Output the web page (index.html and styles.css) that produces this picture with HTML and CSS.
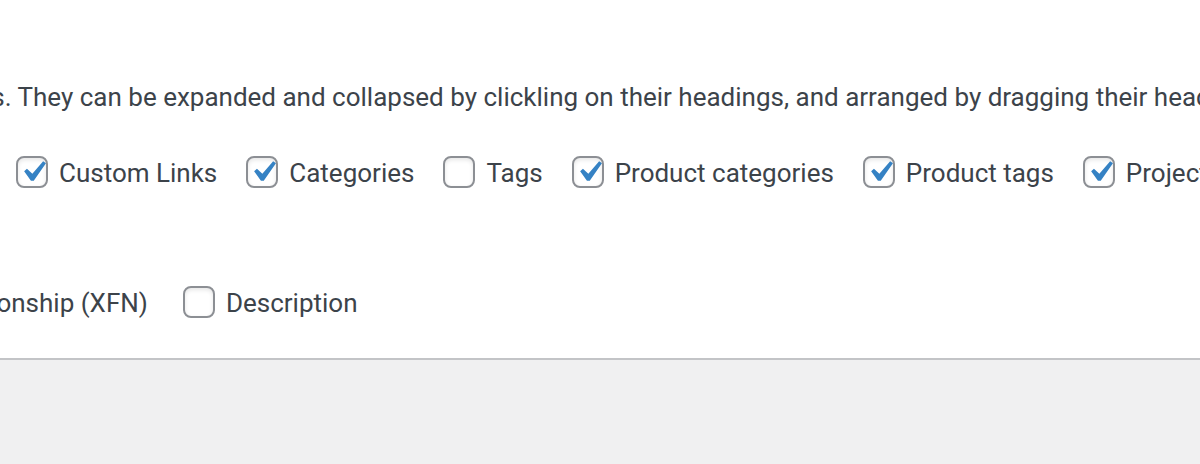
FILE: index.html
```html
<!DOCTYPE html>
<html lang="en">
<head>
  <meta charset="UTF-8">
  <title>Screen Options</title>
  <link rel="stylesheet" href="styles.css">
</head>
<body>
  <!-- Screen options panel -->
  <div class="screen-options">
    <p class="intro">Some screen elements can be shown or hidden by using the checkboxes. They can be expanded and collapsed by clickling on their headings, and arranged by dragging their headings or by clicking on the up and down arrows.</p>

    <div class="prefs-row boxes">
      <label class="pref"><span class="box checked"><svg viewBox="0 0 20 20"><path d="M14.83 4.89l1.34.94-5.81 8.38H9.02L5.78 9.67l1.34-1.25 2.57 2.4z"/></svg></span>Custom Links</label>
      <label class="pref"><span class="box checked"><svg viewBox="0 0 20 20"><path d="M14.83 4.89l1.34.94-5.81 8.38H9.02L5.78 9.67l1.34-1.25 2.57 2.4z"/></svg></span>Categories</label>
      <label class="pref"><span class="box"></span>Tags</label>
      <label class="pref"><span class="box checked"><svg viewBox="0 0 20 20"><path d="M14.83 4.89l1.34.94-5.81 8.38H9.02L5.78 9.67l1.34-1.25 2.57 2.4z"/></svg></span>Product categories</label>
      <label class="pref"><span class="box checked"><svg viewBox="0 0 20 20"><path d="M14.83 4.89l1.34.94-5.81 8.38H9.02L5.78 9.67l1.34-1.25 2.57 2.4z"/></svg></span>Product tags</label>
      <label class="pref"><span class="box checked"><svg viewBox="0 0 20 20"><path d="M14.83 4.89l1.34.94-5.81 8.38H9.02L5.78 9.67l1.34-1.25 2.57 2.4z"/></svg></span>Project categories</label>
    </div>

    <div class="prefs-row advanced">
      <label class="pref"><span class="box"></span>Link Relationship (XFN)</label>
      <label class="pref"><span class="box"></span>Description</label>
    </div>
  </div>
</body>
</html>
```

FILE: styles.css
```css
/* General */
html, body {
  margin: 0;
  height: 100%;
}

body {
  font-family: Roboto, "Liberation Sans", sans-serif;
  font-size: 26px;
  line-height: 39px;
  color: #3c434a;
  background-color: #f0f0f1;
  overflow: hidden;
}

/* Screen options panel */
.screen-options {
  background-color: #ffffff;
  border-bottom: 2px solid #c3c4c7;
  padding: 78px 0 35px;
  overflow: hidden;
}

.intro {
  margin: 0 0 0 -830px;
  white-space: nowrap;
}

.prefs-row {
  display: flex;
  white-space: nowrap;
}

.prefs-row.boxes {
  margin: 37px 0 0 16px;
}

.prefs-row.advanced {
  margin: 91px 0 0 -166px;
}

.pref {
  display: flex;
  align-items: center;
  flex-shrink: 0;
  margin-right: 29px;
}

.advanced .pref {
  margin-right: 35px;
}

.box {
  box-sizing: border-box;
  width: 32px;
  height: 32px;
  margin: 0 11px 4px 0;
  border: 2px solid #8c8f94;
  border-radius: 8px;
  background-color: #ffffff;
  box-shadow: inset 0 2px 4px rgba(0, 0, 0, 0.1);
  position: relative;
  flex-shrink: 0;
}

.box svg {
  position: absolute;
  left: -6px;
  top: -7px;
  width: 42px;
  height: 42px;
  fill: #3582c4;
}
```
